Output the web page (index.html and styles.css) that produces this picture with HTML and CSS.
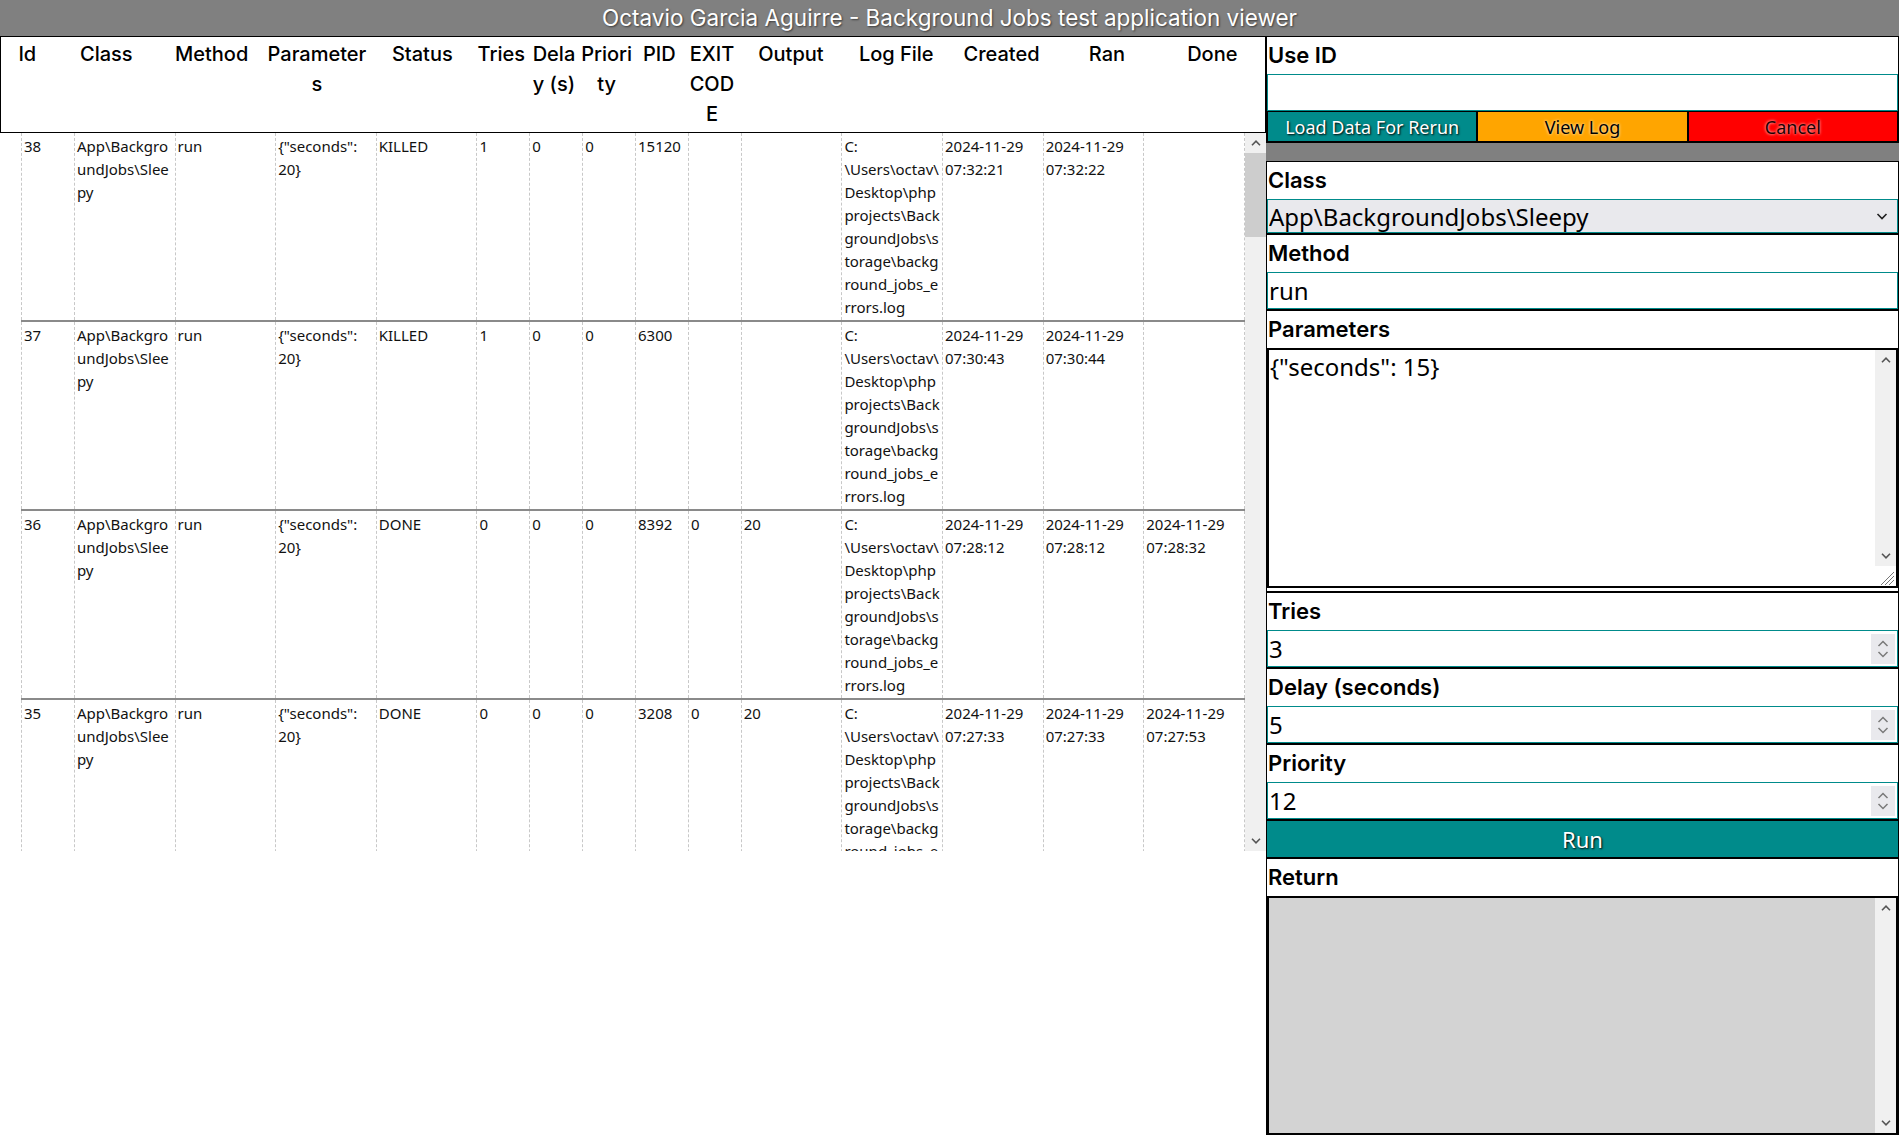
FILE: index.html
```html
<!DOCTYPE html>
<html lang="en">
<head>
<meta charset="utf-8">
<title>Background Jobs test application viewer</title>
<link rel="stylesheet" href="styles.css">
</head>
<body>
<header class="titlebar">Octavio Garcia Aguirre - Background Jobs test application viewer</header>
<main class="app">
  <section class="jobs">
    <div class="jobs-head">
      <table class="head-table">
        <colgroup>
          <col class="u1"><col class="u2"><col class="u2"><col class="u2"><col class="u2">
          <col class="u1"><col class="u1"><col class="u1"><col class="u1"><col class="u1">
          <col class="u2"><col class="u2"><col class="u2"><col class="u2"><col class="u2">
        </colgroup>
        <thead>
          <tr>
            <th>Id</th><th>Class</th><th>Method</th><th>Parameters</th><th>Status</th>
            <th>Tries</th><th>Delay (s)</th><th>Priority</th><th>PID</th><th>EXIT CODE</th>
            <th>Output</th><th>Log File</th><th>Created</th><th>Ran</th><th>Done</th>
          </tr>
        </thead>
      </table>
    </div>
    <div class="jobs-body">
      <div class="jobs-viewport">
        <table class="jobs-table">
          <colgroup>
            <col class="b1"><col class="b2"><col class="b2"><col class="b2"><col class="b2">
            <col class="b1"><col class="b1"><col class="b1"><col class="b1"><col class="b1">
            <col class="b2"><col class="b2"><col class="b2"><col class="b2"><col class="b2">
          </colgroup>
          <tbody>
            <tr>
              <td>38</td><td>App\BackgroundJobs\Sleepy</td><td>run</td><td>{"seconds": 20}</td><td>KILLED</td>
              <td>1</td><td>0</td><td>0</td><td>15120</td><td></td>
              <td></td><td>C:<wbr>\Users\octav\<wbr>Desktop\php projects\BackgroundJobs\storage\background_jobs_errors.log</td><td>2024-11-29 07:32:21</td><td>2024-11-29 07:32:22</td><td></td>
            </tr>
            <tr>
              <td>37</td><td>App\BackgroundJobs\Sleepy</td><td>run</td><td>{"seconds": 20}</td><td>KILLED</td>
              <td>1</td><td>0</td><td>0</td><td>6300</td><td></td>
              <td></td><td>C:<wbr>\Users\octav\<wbr>Desktop\php projects\BackgroundJobs\storage\background_jobs_errors.log</td><td>2024-11-29 07:30:43</td><td>2024-11-29 07:30:44</td><td></td>
            </tr>
            <tr>
              <td>36</td><td>App\BackgroundJobs\Sleepy</td><td>run</td><td>{"seconds": 20}</td><td>DONE</td>
              <td>0</td><td>0</td><td>0</td><td>8392</td><td>0</td>
              <td>20</td><td>C:<wbr>\Users\octav\<wbr>Desktop\php projects\BackgroundJobs\storage\background_jobs_errors.log</td><td>2024-11-29 07:28:12</td><td>2024-11-29 07:28:12</td><td>2024-11-29 07:28:32</td>
            </tr>
            <tr>
              <td>35</td><td>App\BackgroundJobs\Sleepy</td><td>run</td><td>{"seconds": 20}</td><td>DONE</td>
              <td>0</td><td>0</td><td>0</td><td>3208</td><td>0</td>
              <td>20</td><td>C:<wbr>\Users\octav\<wbr>Desktop\php projects\BackgroundJobs\storage\background_jobs_errors.log</td><td>2024-11-29 07:27:33</td><td>2024-11-29 07:27:33</td><td>2024-11-29 07:27:53</td>
            </tr>
          </tbody>
        </table>
      </div>
      <div class="vscroll" aria-hidden="true">
        <span class="vs-btn"><svg width="10" height="6" viewBox="0 0 10 6"><path d="M1 5.2 L5 1.2 L9 5.2" fill="none" stroke="#555" stroke-width="1.6"/></svg></span>
        <span class="vs-track"><span class="vs-thumb"></span></span>
        <span class="vs-btn"><svg width="10" height="6" viewBox="0 0 10 6"><path d="M1 0.8 L5 4.8 L9 0.8" fill="none" stroke="#555" stroke-width="1.6"/></svg></span>
      </div>
    </div>
  </section>

  <aside class="panel">
    <div class="group group-id">
      <label class="group-label" for="use-id">Use ID</label>
      <input class="field" id="use-id" type="text">
      <div class="actions">
        <button class="btn btn-teal" type="button">Load Data For Rerun</button>
        <button class="btn btn-orange" type="button">View Log</button>
        <button class="btn btn-red" type="button">Cancel</button>
      </div>
    </div>

    <div class="group">
      <label class="group-label" for="cls">Class</label>
      <select class="field select" id="cls">
        <option>App\BackgroundJobs\Sleepy</option>
      </select>
    </div>
    <div class="group">
      <label class="group-label" for="method">Method</label>
      <input class="field" id="method" type="text" value="run">
    </div>
    <div class="group group-params">
      <label class="group-label" for="params">Parameters</label>
      <div class="area-box area-box-params">
        <textarea class="area" id="params">{"seconds": 15}</textarea>
        <div class="vscroll vscroll-area" aria-hidden="true">
          <span class="vs-btn"><svg width="10" height="6" viewBox="0 0 10 6"><path d="M1 5.2 L5 1.2 L9 5.2" fill="none" stroke="#555" stroke-width="1.6"/></svg></span>
          <span class="vs-track"></span>
          <span class="vs-btn"><svg width="10" height="6" viewBox="0 0 10 6"><path d="M1 0.8 L5 4.8 L9 0.8" fill="none" stroke="#555" stroke-width="1.6"/></svg></span>
          <span class="vs-resizer"><svg width="20" height="20" viewBox="0 0 20 20"><path d="M19 6 L6 19 M19 10 L10 19 M19 14 L14 19" stroke="#777" stroke-width="1"/></svg></span>
        </div>
      </div>
    </div>
    <div class="group">
      <label class="group-label" for="tries">Tries</label>
      <div class="num">
        <input class="num-input" id="tries" type="number" value="3">
        <span class="spin" aria-hidden="true"><svg width="14" height="26" viewBox="0 0 14 26"><path d="M2.5 10 L7 5.5 L11.5 10 M2.5 16 L7 20.5 L11.5 16" fill="none" stroke="#7a7a7a" stroke-width="1.5"/></svg></span>
      </div>
    </div>
    <div class="group">
      <label class="group-label" for="delay">Delay (seconds)</label>
      <div class="num">
        <input class="num-input" id="delay" type="number" value="5">
        <span class="spin" aria-hidden="true"><svg width="14" height="26" viewBox="0 0 14 26"><path d="M2.5 10 L7 5.5 L11.5 10 M2.5 16 L7 20.5 L11.5 16" fill="none" stroke="#7a7a7a" stroke-width="1.5"/></svg></span>
      </div>
    </div>
    <div class="group">
      <label class="group-label" for="priority">Priority</label>
      <div class="num">
        <input class="num-input" id="priority" type="number" value="12">
        <span class="spin" aria-hidden="true"><svg width="14" height="26" viewBox="0 0 14 26"><path d="M2.5 10 L7 5.5 L11.5 10 M2.5 16 L7 20.5 L11.5 16" fill="none" stroke="#7a7a7a" stroke-width="1.5"/></svg></span>
      </div>
    </div>
    <button class="run" type="button">Run</button>
    <div class="group group-return">
      <label class="group-label" for="ret">Return</label>
      <div class="area-box area-box-return">
        <textarea class="area area-return" id="ret" readonly></textarea>
        <div class="vscroll vscroll-area" aria-hidden="true">
          <span class="vs-btn"><svg width="10" height="6" viewBox="0 0 10 6"><path d="M1 5.2 L5 1.2 L9 5.2" fill="none" stroke="#555" stroke-width="1.6"/></svg></span>
          <span class="vs-track"></span>
          <span class="vs-btn"><svg width="10" height="6" viewBox="0 0 10 6"><path d="M1 0.8 L5 4.8 L9 0.8" fill="none" stroke="#555" stroke-width="1.6"/></svg></span>
        </div>
      </div>
    </div>
  </aside>
</main>
</body>
</html>
```

FILE: styles.css
```css
* { box-sizing: border-box; }

html, body {
  margin: 0;
  height: 100%;
}

body {
  background: #808080;
  font-family: Inter, "Noto Sans", sans-serif;
  color: #000;
  overflow: hidden;
}

.titlebar {
  height: 36px;
  line-height: 36px;
  text-align: center;
  color: #fff;
  font-size: 22.5px;
  text-shadow: 1px 1px 2px rgba(0, 0, 0, 0.55);
}

.app {
  display: grid;
  grid-template-columns: 1266px 1fr;
  height: calc(100% - 36px);
}

/* ---------- jobs table ---------- */
.jobs {
  background: #fff;
  min-width: 0;
}

.jobs-head {
  border: 1px solid #000;
}

.head-table,
.jobs-table {
  width: 100%;
  table-layout: fixed;
  border-collapse: collapse;
}

.u1 { width: 4.1667%; }
.u2 { width: 8.3333%; }

.b1 { width: 4.32%; }
.b2 { width: 8.22%; }

.head-table th {
  font-weight: 500;
  font-size: 20px;
  line-height: 30px;
  padding: 2px 0 3px;
  vertical-align: top;
  text-align: center;
  overflow-wrap: anywhere;
}

.jobs-body {
  display: flex;
  height: 718px;
}

.jobs-viewport {
  flex: 1;
  min-width: 0;
  overflow: hidden;
  padding-left: 21px;
}

.jobs-table {
  font-family: "Noto Sans", sans-serif;
  font-size: 15px;
  line-height: 23px;
  color: #111;
}

.jobs-table tr {
  border-bottom: 2px solid #8a8a8a;
}

.jobs-table td {
  padding: 2px 2px 1px;
  vertical-align: top;
  border-left: 1px dashed #c8c8c8;
  border-right: 1px dashed #c8c8c8;
  overflow-wrap: anywhere;
}

/* ---------- drawn scrollbars ---------- */
.vscroll {
  flex: none;
  width: 21px;
  display: flex;
  flex-direction: column;
  background: #f0f0f0;
}

.vs-btn {
  flex: none;
  height: 20px;
  display: flex;
  align-items: center;
  justify-content: center;
}

.vs-track {
  flex: 1;
  display: block;
}

.vs-thumb {
  display: block;
  height: 84px;
  background: #cdcdcd;
}

.vs-resizer {
  flex: none;
  height: 20px;
  display: block;
  background: #fff;
}

.vs-resizer svg {
  display: block;
}

/* ---------- right panel ---------- */
.panel {
  display: flex;
  flex-direction: column;
  min-width: 0;
}

.group {
  background: #fff;
  border: 1px solid #000;
}

.group-id {
  margin-bottom: 18px;
}

.group-label {
  display: block;
  height: 37px;
  line-height: 37px;
  font-size: 22px;
  font-weight: 600;
  padding-left: 1px;
}

.field {
  display: block;
  width: 100%;
  height: 37px;
  margin: 0;
  padding: 0 1px;
  border: 1px solid #008b8b;
  border-radius: 0;
  background: #fff;
  color: #000;
  font-family: "Noto Sans", sans-serif;
  font-size: 24px;
  outline: none;
}

.select {
  height: 34px;
  background: #e9e9ed url("data:image/svg+xml,%3Csvg xmlns='http://www.w3.org/2000/svg' width='14' height='10'%3E%3Cpath d='M2.5 3 L7 7.5 L11.5 3' fill='none' stroke='%23202020' stroke-width='1.6'/%3E%3C/svg%3E") no-repeat right 8px center;
  appearance: none;
  -webkit-appearance: none;
}

.num {
  display: flex;
  align-items: center;
  height: 37px;
  border: 1px solid #008b8b;
  background: #fff;
}

.num-input {
  flex: 1;
  min-width: 0;
  height: 100%;
  margin: 0;
  padding: 0 1px;
  border: none;
  outline: none;
  background: transparent;
  font-family: "Noto Sans", sans-serif;
  font-size: 24px;
  color: #000;
  -moz-appearance: textfield;
}

.num-input::-webkit-inner-spin-button,
.num-input::-webkit-outer-spin-button {
  -webkit-appearance: none;
  margin: 0;
}

.spin {
  flex: none;
  width: 24px;
  height: 30px;
  margin-right: 2px;
  background: #e9e9ed;
  display: flex;
  align-items: center;
  justify-content: center;
}

.actions {
  display: flex;
}

.btn {
  flex: 1;
  height: 31px;
  margin: 0;
  border: 1px solid #000;
  border-radius: 0;
  font-family: "Noto Sans", sans-serif;
  font-size: 18px;
  padding: 0;
  cursor: pointer;
}

.btn-teal {
  background: #008b8b;
  color: #fff;
  text-shadow: 1px 1px 2px #000;
}

.btn-orange {
  background: #ffa500;
  color: #000;
  text-shadow: 0 0 3px #fff;
}

.btn-red {
  background: #ff0000;
  color: #1a0000;
  text-shadow: 0 0 3px #fff;
}

.area-box {
  display: flex;
  border: 2px solid #000;
}

.area-box-params {
  height: 240px;
  margin-bottom: 3px;
  background: #fff;
}

.area-box-return {
  height: 239px;
  background: #d3d3d3;
}

.area {
  flex: 1;
  min-width: 0;
  display: block;
  margin: 0;
  padding: 0 1px;
  border: none;
  border-radius: 0;
  background: transparent;
  font-family: "Noto Sans", sans-serif;
  font-size: 24px;
  line-height: 33px;
  color: #000;
  overflow: hidden;
  resize: none;
  outline: none;
}

.run {
  display: block;
  width: 100%;
  height: 38px;
  margin: 0;
  border: 1px solid #000;
  border-radius: 0;
  background: #008b8b;
  color: #fff;
  font-family: "Noto Sans", sans-serif;
  font-size: 22px;
  text-shadow: 1px 1px 2px #000;
  cursor: pointer;
}
```
